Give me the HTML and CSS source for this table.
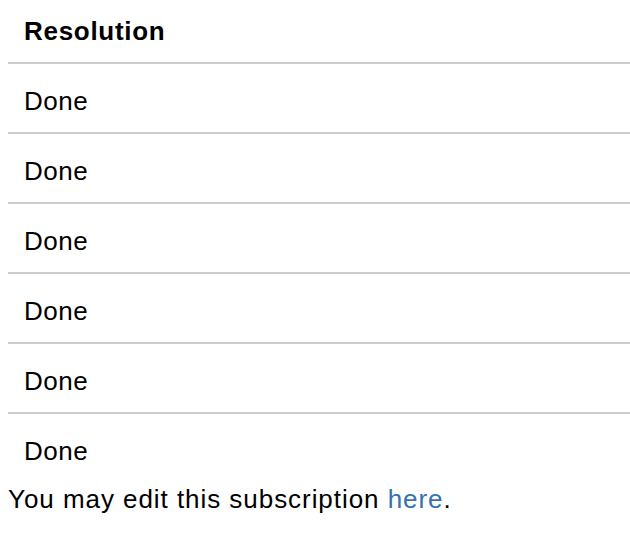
FILE: index.html
```html
<!DOCTYPE html>
<html>
<head>
<meta charset="utf-8">
<link rel="stylesheet" href="styles.css">
</head>
<body>
<table class="issues">
  <thead>
    <tr><th class="head">Resolution</th></tr>
  </thead>
  <tbody>
    <tr><td class="cell">Done</td></tr>
    <tr><td class="cell">Done</td></tr>
    <tr><td class="cell">Done</td></tr>
    <tr><td class="cell">Done</td></tr>
    <tr><td class="cell">Done</td></tr>
    <tr class="last"><td class="cell">Done</td></tr>
  </tbody>
</table>
<p class="note">You may edit this subscription <a class="link" href="#">here</a>.</p>
</body>
</html>
```
FILE: styles.css
```css
html, body {
  margin: 0;
  padding: 0;
  background: #ffffff;
  overflow: hidden;
}
body {
  padding-left: 8px;
  font-family: "Liberation Sans", Arial, sans-serif;
  font-size: 26px;
  line-height: 30px;
  color: #000000;
}
.issues {
  width: 100%;
  border-collapse: collapse;
  border-spacing: 0;
}
.head {
  text-align: left;
  font-weight: bold;
  letter-spacing: 0.7px;
  padding: 16px 16px 16px 16px;
  border-bottom: 2px solid #cccccc;
}
.cell {
  letter-spacing: 0.5px;
  padding: 22px 16px 16px 16px;
  border-bottom: 2px solid #cccccc;
}
.last .cell {
  border-bottom: none;
}
.note {
  margin: 2px 0 0 0;
  letter-spacing: 0.95px;
}
.link {
  color: #3572b0;
  text-decoration: none;
}
```
